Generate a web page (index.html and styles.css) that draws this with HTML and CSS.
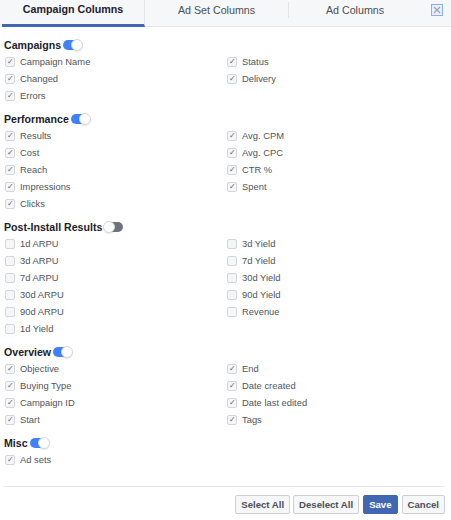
FILE: index.html
```html
<!DOCTYPE html>
<html lang="en">
<head>
    <meta charset="UTF-8">
    <title>Columns</title>
    <link rel="stylesheet" href="styles.css">
</head>
<body>

<div class="tabs">
    <div class="tab active">Campaign Columns</div>
    <div class="tab">Ad Set Columns</div>
    <div class="tab">Ad Columns</div>
    <div class="close">
        <svg width="12" height="12" viewBox="0 0 12 12">
            <rect x="0.5" y="0.5" width="11" height="11" fill="#e9eefa" stroke="#8faee8"/>
            <path d="M3 3 L9 9 M9 3 L3 9" stroke="#9aa6bd" stroke-width="1.3"/>
        </svg>
    </div>
</div>

<div class="content">
    <div class="section">
        <div class="head">Campaigns <span class="toggle on"></span></div>
        <div class="grid">
            <label class="item checked">Campaign Name</label>
            <label class="item checked">Status</label>
            <label class="item checked">Changed</label>
            <label class="item checked">Delivery</label>
            <label class="item checked">Errors</label>
        </div>
    </div>

    <div class="section">
        <div class="head">Performance <span class="toggle on"></span></div>
        <div class="grid">
            <label class="item checked">Results</label>
            <label class="item checked">Avg. CPM</label>
            <label class="item checked">Cost</label>
            <label class="item checked">Avg. CPC</label>
            <label class="item checked">Reach</label>
            <label class="item checked">CTR %</label>
            <label class="item checked">Impressions</label>
            <label class="item checked">Spent</label>
            <label class="item checked">Clicks</label>
        </div>
    </div>

    <div class="section">
        <div class="head">Post-Install Results<span class="toggle off"></span></div>
        <div class="grid">
            <label class="item">1d ARPU</label>
            <label class="item">3d Yield</label>
            <label class="item">3d ARPU</label>
            <label class="item">7d Yield</label>
            <label class="item">7d ARPU</label>
            <label class="item">30d Yield</label>
            <label class="item">30d ARPU</label>
            <label class="item">90d Yield</label>
            <label class="item">90d ARPU</label>
            <label class="item">Revenue</label>
            <label class="item">1d Yield</label>
        </div>
    </div>

    <div class="section">
        <div class="head">Overview <span class="toggle on"></span></div>
        <div class="grid">
            <label class="item checked">Objective</label>
            <label class="item checked">End</label>
            <label class="item checked">Buying Type</label>
            <label class="item checked">Date created</label>
            <label class="item checked">Campaign ID</label>
            <label class="item checked">Date last edited</label>
            <label class="item checked">Start</label>
            <label class="item checked">Tags</label>
        </div>
    </div>

    <div class="section">
        <div class="head">Misc <span class="toggle on"></span></div>
        <div class="grid">
            <label class="item checked">Ad sets</label>
        </div>
    </div>
</div>

<div class="footer">
    <button class="btn">Select All</button>
    <button class="btn">Deselect All</button>
    <button class="btn primary">Save</button>
    <button class="btn">Cancel</button>
</div>

</body>
</html>
```

FILE: styles.css
```css
body {
    margin: 0;
    font-family: 'Liberation Sans', Arial, sans-serif;
    font-size: 9.4px;
    color: #50545b;
    background: #fff;
    width: 451px;
}
.tabs {
    display: flex;
    align-items: stretch;
    height: 26px;
    background: #f6f7f9;
    border-bottom: 1px solid #e5e5e5;
    padding-left: 2px;
}
.tab {
    width: 143px;
    display: flex;
    align-items: center;
    justify-content: center;
    font-size: 10.7px;
    color: #4b4f56;
    border-right: 1px solid #e3e4e6;
    margin: 2px 0 8px;
}
.tab:nth-child(3) {
    width: 132px;
    border-right: none;
}
.tab.active {
    font-weight: bold;
    color: #1d2129;
    margin: 0;
    padding-bottom: 6px;
    border-bottom: 3px solid #4267b2;
    box-sizing: border-box;
    height: 27px;
}
.close {
    display: flex;
    align-items: flex-start;
    padding: 4px 0 0 10px;
}
.content {
    padding: 9px 4px 0 4px;
}
.section {
    margin-bottom: 6px;
}
.head {
    height: 17px;
    display: flex;
    align-items: center;
    font-size: 10.6px;
    font-weight: bold;
    color: #1d2129;
}
.toggle {
    position: relative;
    display: inline-block;
    width: 19px;
    height: 10px;
    border-radius: 6px;
    margin-left: 2px;
    margin-top: 1px;
}
.toggle::after {
    content: '';
    position: absolute;
    top: -1px;
    width: 12px;
    height: 12px;
    border-radius: 50%;
    background: #fff;
    border: 1px solid #d6d9dd;
    box-sizing: border-box;
    box-shadow: 0 1px 1px rgba(0, 0, 0, 0.1);
}
.toggle.on {
    background: #4080ff;
}
.toggle.on::after {
    right: -1px;
}
.toggle.off {
    background: #6f737a;
}
.toggle.off::after {
    left: -1px;
}
.grid {
    display: grid;
    grid-template-columns: 222px 1fr;
}
.item {
    height: 17px;
    display: flex;
    align-items: center;
    padding-left: 1px;
}
.item::before {
    content: '';
    box-sizing: border-box;
    width: 10px;
    height: 10px;
    border: 1px solid #d3d6db;
    border-radius: 2px;
    background: #f5f6f7;
    margin-right: 5px;
    flex-shrink: 0;
}
.item.checked::before {
    content: '\2713';
    font-size: 8px;
    line-height: 8px;
    text-align: center;
    color: #5b6577;
}
.footer {
    margin: 18px 6px 0 3px;
    border-top: 1px solid #e9eaed;
    padding-top: 8px;
    display: flex;
    justify-content: flex-end;
    gap: 3px;
}
.btn {
    font-family: 'Liberation Sans', Arial, sans-serif;
    font-size: 9.6px;
    font-weight: bold;
    color: #4b4f56;
    background: #f6f7f9;
    border: 1px solid #ced0d4;
    border-radius: 2px;
    height: 19px;
    padding: 0 5px;
}
.btn.primary {
    background: #4267b2;
    border-color: #4267b2;
    color: #fff;
    margin: 0 1px;
}
```
